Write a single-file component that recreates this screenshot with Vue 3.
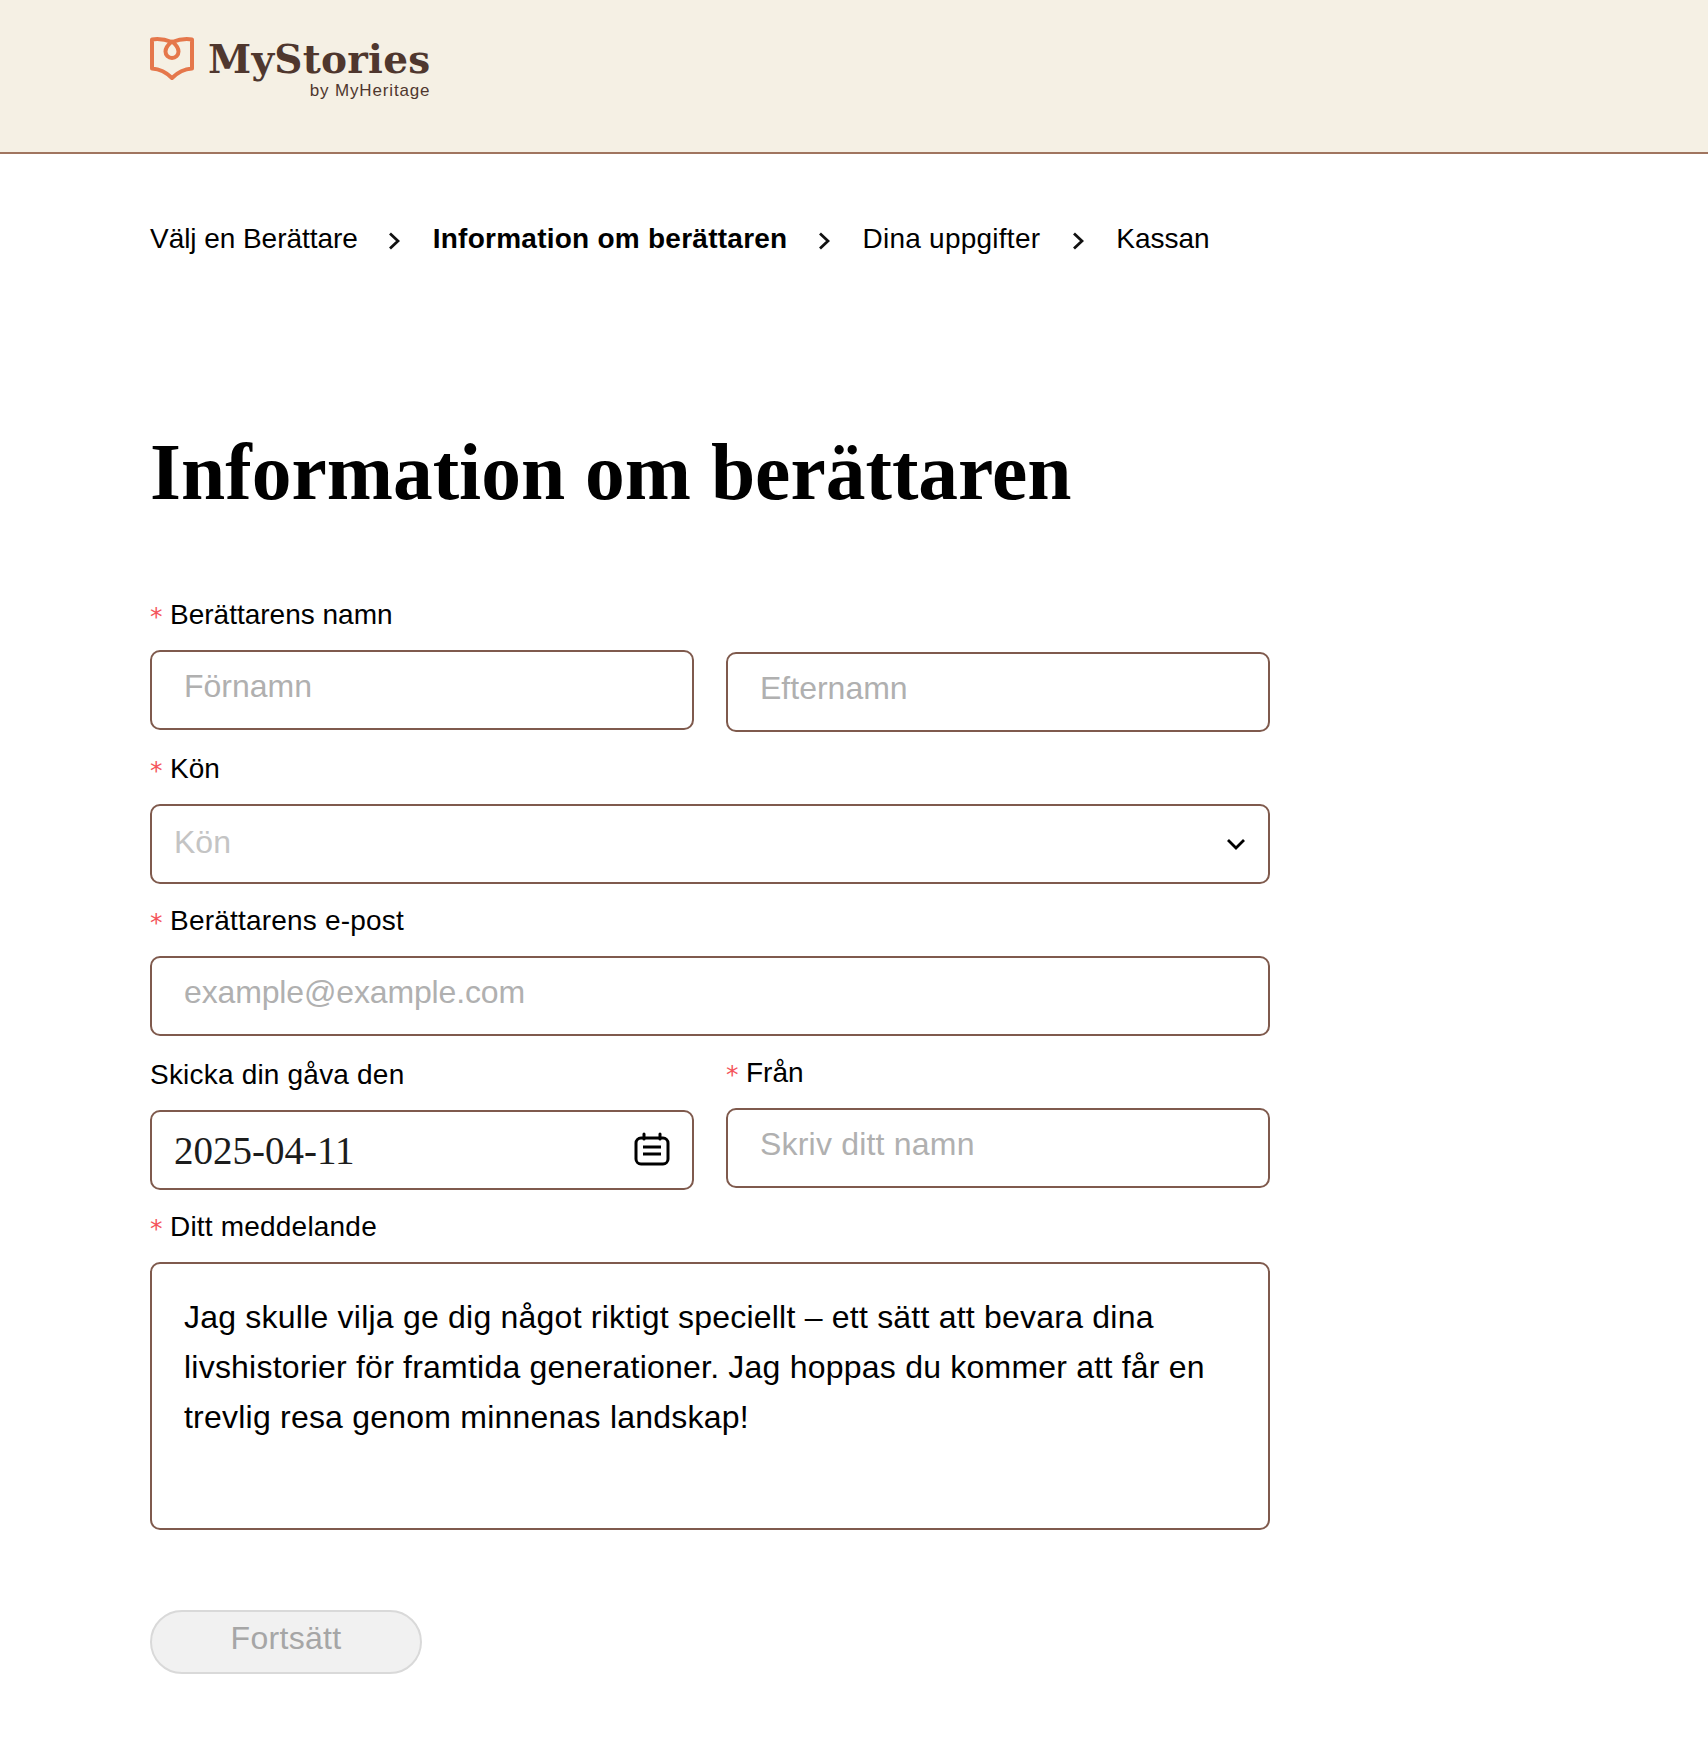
<script setup>
const steps = [
  { text: 'Välj en Berättare' },
  { text: 'Information om berättaren', active: true },
  { text: 'Dina uppgifter' },
  { text: 'Kassan' },
]
</script>

<template>
  <div class="page">
    <header class="top">
      <div class="logo">
        <svg class="mark" width="46" height="46" viewBox="0 0 46 46" fill="none">
          <path d="M2 3.500C8 2.500 14 3 22 6C30 3 36 2.500 42 3.500V32.500C35 33 28 36 22 42C16 36 9 33 2 32.500Z" stroke="#e5774b" stroke-width="4" stroke-linejoin="round"/>
          <path d="M22 5.500C17.500 9 15.500 12 15.500 15.500A6.500 6.500 0 0 0 28.500 15.500C28.500 12 26.500 9 22 5.500Z" stroke="#e5774b" stroke-width="4" stroke-linejoin="round"/>
        </svg>
        <div class="wordmark">
          <div class="brand">MyStories</div>
          <div class="by">by MyHeritage</div>
        </div>
      </div>
    </header>

    <main class="main">
      <nav class="crumbs">
        <template v-for="(s, i) in steps" :key="s.text">
          <span :class="['crumb', { active: s.active }]">{{ s.text }}</span>
          <svg v-if="i < steps.length - 1" class="sep" width="12" height="20" viewBox="0 0 12 20" fill="none">
            <path d="M2 2.500L10 10L2 17.500" stroke="#111" stroke-width="2.800"/>
          </svg>
        </template>
      </nav>

      <h1 class="title">Information om berättaren</h1>

      <form class="form" @submit.prevent>
        <div class="label"><span class="req">*</span>Berättarens namn</div>
        <div class="pair first">
          <div class="box ph">Förnamn</div>
          <div class="box ph low">Efternamn</div>
        </div>

        <div class="label nudge"><span class="req">*</span>Kön</div>
        <div class="box select snug">
          <span class="ph-light">Kön</span>
          <svg width="20" height="12" viewBox="0 0 20 12" fill="none">
            <path d="M2 2L10 10L18 2" stroke="#000" stroke-width="2.800"/>
          </svg>
        </div>

        <div class="label wide"><span class="req">*</span>Berättarens e-post</div>
        <div class="box ph tight">example@example.com</div>

        <div class="pair second">
          <div class="col">
            <div class="label wide">Skicka din gåva den</div>
            <div class="box select date snug">
              <span>2025-04-11</span>
              <svg width="36" height="36" viewBox="0 0 36 36" fill="none">
                <rect x="2" y="6" width="32" height="26" rx="5" stroke="#000" stroke-width="3"/>
                <path d="M10 2V7M26 2V7" stroke="#000" stroke-width="3" stroke-linecap="round"/>
                <path d="M9 15H27M9 22H27" stroke="#000" stroke-width="3"/>
              </svg>
            </div>
          </div>
          <div class="col up">
            <div class="label"><span class="req">*</span>Från</div>
            <div class="box ph loose snug">Skriv ditt namn</div>
          </div>
        </div>

        <div class="label wide"><span class="req">*</span>Ditt meddelande</div>
        <div class="box message">Jag skulle vilja ge dig något riktigt speciellt – ett sätt att bevara dina livshistorier för framtida generationer. Jag hoppas du kommer att får en trevlig resa genom minnenas landskap!</div>

        <button class="next" type="button" disabled>Fortsätt</button>
      </form>
    </main>
  </div>
</template>

<style scoped>
.page { width: 1708px; height: 1744px; background: #fff; font-family: "Liberation Sans", Arial, sans-serif; color: #000; overflow: hidden; }
.top { box-sizing: border-box; height: 154px; background: #f5f0e4; border-bottom: 2px solid #a0755f; padding: 37px 0 0 150px; }
.logo { display: flex; gap: 12px; align-items: flex-start; }
.mark { margin-top: -1px; }
.wordmark { display: flex; flex-direction: column; align-items: flex-end; }
.brand { font-family: "DejaVu Serif", serif; font-weight: 700; font-size: 39px; line-height: 44px; color: #4f372e; letter-spacing: 0.25px; }
.by { font-size: 17px; line-height: 20px; color: #4f372e; letter-spacing: 0.85px; }
.main { padding: 0 0 0 150px; width: 1120px; }
.crumbs { display: flex; align-items: center; gap: 32px; height: 40px; margin-top: 65px; }
.crumb { font-size: 28px; line-height: 40px; letter-spacing: 0.25px; }
.crumb:first-child { letter-spacing: -0.05px; margin-right: -2px; }
.crumb:last-child { letter-spacing: 0; }
.sep { margin-top: 4px; }
.sep:nth-child(2) { margin-right: 1px; }
.crumb.active { font-weight: 700; margin-right: -1px; }
.title { font-family: "Liberation Serif", serif; font-weight: 700; font-size: 79.500px; line-height: 90px; margin: 168px 0 0; }
.form { margin-top: 78px; }
.label { font-size: 28px; line-height: 36px; height: 36px; display: flex; align-items: center; margin-bottom: 19px; padding-top: 3px; box-sizing: border-box; }
.wide { letter-spacing: 0.2px; }
.nudge { margin-top: 1px; }
.second { padding-top: 1px; }
.req { color: #f4545c; width: 20px; font-family: "DejaVu Sans", sans-serif; font-size: 25px; line-height: 36px; letter-spacing: 0; padding-top: 4px; }
.box { box-sizing: border-box; height: 80px; border: 2px solid #7f5a4d; border-radius: 10px; background: #fff; margin-bottom: 18px; }
.snug { margin-bottom: 17px; }
.ph { color: #b0b0b0; font-size: 32px; line-height: 68px; padding: 0 32px; }
.tight { letter-spacing: -0.15px; }
.loose { letter-spacing: 0.2px; }
.pair { display: grid; grid-template-columns: 544px 544px; gap: 32px; }
.low { margin-top: 2px; margin-bottom: 16px; }
.select { display: flex; align-items: center; justify-content: space-between; padding: 0 22px; }
.ph-light { color: #c4c4c4; font-size: 32px; margin-bottom: 4px; }
.date { font-family: "Liberation Serif", serif; font-size: 39px; letter-spacing: 0; color: #1c1c1c; }
.up { margin-top: -2px; }
.message { height: 268px; font-size: 32px; line-height: 50px; letter-spacing: 0.22px; padding: 28px 32px; margin-bottom: 80px; }
.next { display: block; width: 272px; height: 64px; border-radius: 32px; border: 2px solid #d9d9d9; background: #f1f1f1; color: #a6a6a6; font-family: "Liberation Sans", Arial, sans-serif; font-size: 32px; letter-spacing: 0.3px; padding: 0 0 8px; }
</style>
